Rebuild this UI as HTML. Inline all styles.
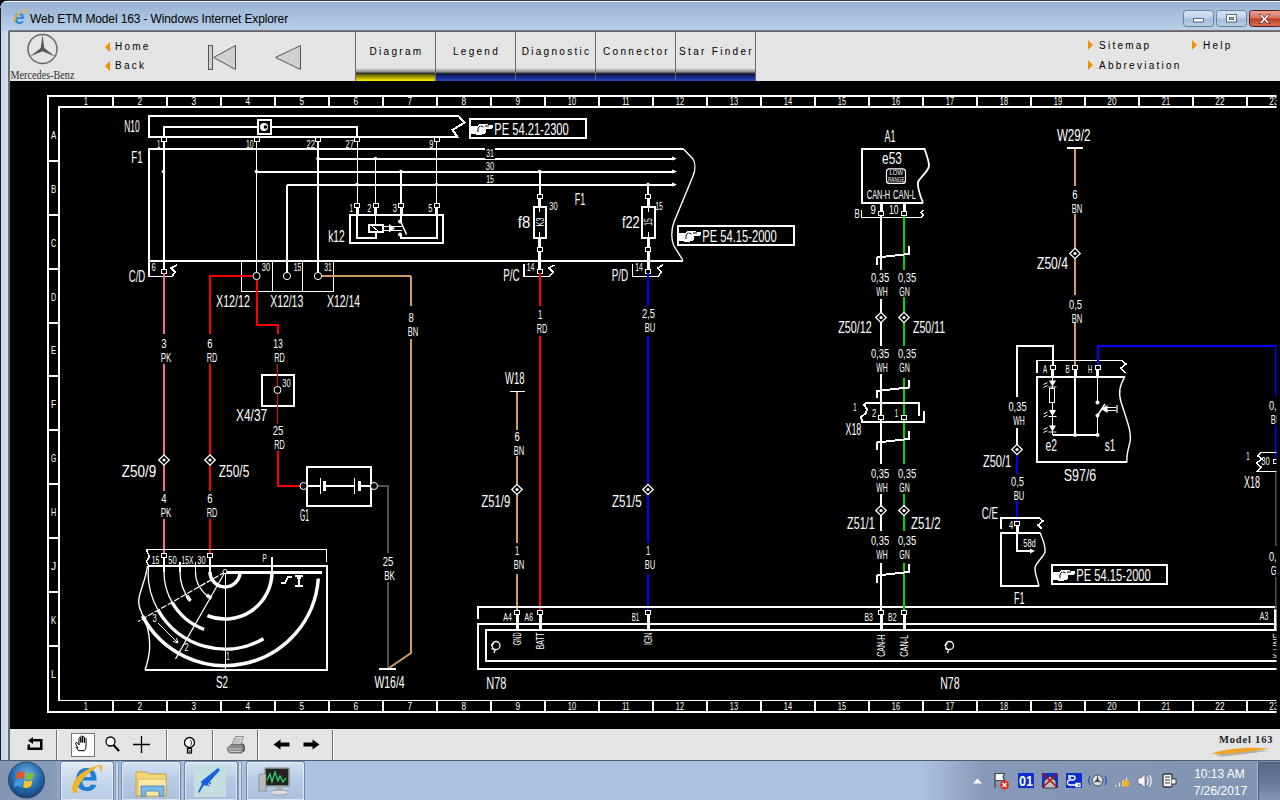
<!DOCTYPE html>
<html><head><meta charset="utf-8"><title>Web ETM Model 163</title>
<style>
*{margin:0;padding:0;box-sizing:border-box}
html,body{width:1280px;height:800px;overflow:hidden;background:#000;font-family:"Liberation Sans",sans-serif}
.abs{position:absolute}
#title{left:0;top:0;width:1280px;height:31px;background:linear-gradient(#98b3d3 0,#a3bddb 40%,#b2cae6 80%,#bad2ed 100%);border-top:1px solid #3a3a3a}
#title:before{content:"";position:absolute;left:0;top:0;width:100%;height:1px;background:#eef4fb}
#ttext{left:30px;top:11px;letter-spacing:-.13px;font-size:12px;color:#000;white-space:nowrap;line-height:16px}
#lborder{left:0;top:8px;width:10px;height:752px;background:linear-gradient(90deg,#222 0,#222 10%,#c4d5ea 12%,#cedced 55%,#d5e1f0 80%,#6c6c6c 84%,#6c6c6c 96%,#e4e4e4 100%);clip-path:polygon(0 0,1px 0,1px 23px,10px 23px,10px 100%,0 100%)}
#hline{left:9px;top:30px;width:1271px;height:2px;background:linear-gradient(#7d7d7d,#5e5e5e)}
#head{left:10px;top:32px;width:1270px;height:49px;background:#e4e4e4}
#black{left:10px;top:81px;width:1270px;height:648px;background:#000}
#tool{left:10px;top:729px;width:1270px;height:31px;background:#e4e4e4}
#task{left:0;top:760px;width:1280px;height:40px;background:linear-gradient(90deg,#8396b2 0,#8699b5 4.2%,#a3bbd9 5.2%,#a9c2e0 24%,#a9c2e0 72%,#8699b6 77%,#8094b1 100%);border-top:1px solid #4e5d72}
.nav{font-size:10px;letter-spacing:2.25px;color:#000;white-space:nowrap;line-height:12px}
.tab{top:32px;width:80px;height:49px;border-left:1px solid #6a6a6a;background:#e4e4e4}
.tab span{position:absolute;left:0;width:100%;top:14px;text-align:center;font-size:10px;letter-spacing:2.3px;padding-left:2px;line-height:12px;color:#000;white-space:nowrap}
.tab i{position:absolute;left:0;bottom:0;width:100%;height:13px;background:linear-gradient(#e4e4e4 0,#8a8a8a 30%,#2a2a2a 42%,#0b1550 48%,#2a44c8 100%)}
.tab.on i{background:linear-gradient(#e4e4e4 0,#8a8a8a 30%,#2a2a2a 42%,#5a5a00 48%,#fff000 100%)}
.sep{top:730px;width:2px;height:30px;border-left:1px solid #6e6e6e;border-right:1px solid #fff}
.tb{top:761px;height:39px;box-shadow:inset 0 0 0 1px rgba(255,255,255,.55);border:1px solid #6f86a6;border-bottom:0;border-radius:3px 3px 0 0;background:linear-gradient(#d3e1f2,#b4c9e4 50%,#a9c0de)}
svg text{font-family:"Liberation Sans",sans-serif;fill:#fff}
</style></head><body>
<div class="abs" id="title"></div>
<svg class="abs" style="left:0;top:0" width="12" height="12"><path d="M0,0 H8 C3,1 1,3 0,8 Z" fill="#000"/></svg>
<svg class="abs" style="left:12px;top:8px" width="18" height="18" viewBox="0 0 18 18"><text x="1.5" y="16" font-size="20" font-weight="bold" style="fill:#2b8ae2;font-family:'Liberation Sans',sans-serif">e</text><path d="M1.5,13.5 C0,10 6,3 14.5,1.5 C9,4 3,9 3,14 Z" fill="#f0b428"/><path d="M14,1.5 C16,2 15.5,5 14,6.5 C14.5,4.5 14.5,3 13,2.5 Z" fill="#f0b428"/></svg>
<div class="abs" id="ttext">Web ETM Model 163 - Windows Internet Explorer</div>
<!-- window buttons -->
<svg class="abs" style="left:1180px;top:8px" width="100" height="21" viewBox="1180 8 100 21">
<defs><linearGradient id="gb" x1="0" y1="0" x2="0" y2="1"><stop offset="0" stop-color="#d6e3f3"/><stop offset=".48" stop-color="#c0d3ea"/><stop offset=".52" stop-color="#a3bcdb"/><stop offset="1" stop-color="#b9cfe8"/></linearGradient>
<linearGradient id="gr" x1="0" y1="0" x2="0" y2="1"><stop offset="0" stop-color="#e9a99b"/><stop offset=".48" stop-color="#d7705c"/><stop offset=".52" stop-color="#c03a22"/><stop offset="1" stop-color="#d8735a"/></linearGradient></defs>
<rect x="1183.5" y="10.5" width="30" height="16" rx="3" fill="url(#gb)" stroke="#6f819a"/>
<rect x="1216.5" y="10.5" width="30" height="16" rx="3" fill="url(#gb)" stroke="#6f819a"/>
<rect x="1249.5" y="10.5" width="32" height="16" rx="3" fill="url(#gr)" stroke="#5a1c12"/>
<rect x="1193.5" y="18.5" width="10" height="3.5" fill="#fff" stroke="#5b6a80" stroke-width="1"/>
<rect x="1226.5" y="14.5" width="10" height="7.5" fill="#fff" stroke="#5b6a80" stroke-width="1"/><rect x="1229.5" y="17.5" width="4" height="2" fill="#a9bfdc" stroke="#5b6a80" stroke-width="1"/>
<path d="M1259,14.5 l3,0 l2.5,3 l2.5,-3 l3,0 l-4,4.5 l4,4.5 l-3,0 l-2.5,-3 l-2.5,3 l-3,0 l4,-4.5 Z" fill="#fff" stroke="#5b3030" stroke-width=".8"/>
</svg>
<div class="abs" id="lborder"></div>
<div class="abs" id="hline"></div>
<div class="abs" id="head"></div>
<!-- logo -->
<svg class="abs" style="left:10px;top:32px" width="80" height="49" viewBox="10 32 80 49">
<circle cx="42.5" cy="49" r="14.5" fill="none" stroke="#6a6a6a" stroke-width="1.5"/>
<path d="M42.5,34.5 L44.300,48 L55,56.5 L42.5,51.300 L30,56.5 L40.700,48 Z" fill="#555"/>
<text x="10.5" y="79" font-size="11.5" textLength="64" lengthAdjust="spacingAndGlyphs" style="fill:#333;font-family:'Liberation Serif',serif">Mercedes-Benz</text>
</svg>
<svg class="abs" style="left:101.5px;top:39px" width="10" height="36"><path d="M8,3 L3,8 L8,13 Z M8,22 L3,27 L8,32 Z" fill="#f39200"/></svg>
<div class="abs nav" style="left:115px;top:41px">Home</div>
<div class="abs nav" style="left:115px;top:60px">Back</div>
<svg class="abs" style="left:200px;top:38px" width="110" height="38" viewBox="200 38 110 38">
<rect x="208.5" y="45.5" width="4" height="24" fill="#d0d0d0" stroke="#555"/>
<path d="M213.5,57.5 L235.5,45.5 V69.5 Z" fill="#d0d0d0" stroke="#555"/>
<path d="M275.5,57.5 L300.5,45.5 V69.5 Z" fill="#d0d0d0" stroke="#555"/>
</svg>
<div class="abs tab on" style="left:355px"><span>Diagram</span><i></i></div>
<div class="abs tab" style="left:435px"><span>Legend</span><i></i></div>
<div class="abs tab" style="left:515px"><span>Diagnostic</span><i></i></div>
<div class="abs tab" style="left:595px"><span>Connector</span><i></i></div>
<div class="abs tab" style="left:675px;border-right:1px solid #6a6a6a;width:81px"><span>Star Finder</span><i></i></div>
<svg class="abs" style="left:1084px;top:38px" width="120" height="36"><path d="M4,2 L9,7 L4,12 Z M4,22 L9,27 L4,32 Z M108,2 L113,7 L108,12 Z" fill="#f39200"/></svg>
<div class="abs nav" style="left:1099px;top:40px">Sitemap</div>
<div class="abs nav" style="left:1203px;top:40px">Help</div>
<div class="abs nav" style="left:1099px;top:60px">Abbreviation</div>
<div class="abs" id="black"></div>
<svg class="abs" style="left:10px;top:81px" width="1270" height="648" viewBox="10 81 1270 648" shape-rendering="crispEdges">
<defs><clipPath id="clip"><rect x="10" y="81" width="1266.5" height="648"/></clipPath></defs>
<g clip-path="url(#clip)">
<line x1="48" y1="95" x2="48" y2="712.5" stroke="#fff" stroke-width="2"/>
<line x1="47" y1="96" x2="1300" y2="96" stroke="#fff" stroke-width="2"/>
<line x1="47" y1="711.5" x2="1300" y2="711.5" stroke="#fff" stroke-width="2"/>
<line x1="59" y1="106" x2="59" y2="701" stroke="#fff" stroke-width="2"/>
<line x1="58" y1="107" x2="1300" y2="107" stroke="#fff" stroke-width="2"/>
<line x1="58" y1="700.5" x2="1300" y2="700.5" stroke="#fff" stroke-width="1"/>
<line x1="113.0" y1="96" x2="113.0" y2="107" stroke="#fff" stroke-width="2"/>
<line x1="113.0" y1="700" x2="113.0" y2="711" stroke="#fff" stroke-width="2"/>
<line x1="167.0" y1="96" x2="167.0" y2="107" stroke="#fff" stroke-width="2"/>
<line x1="167.0" y1="700" x2="167.0" y2="711" stroke="#fff" stroke-width="2"/>
<line x1="221.0" y1="96" x2="221.0" y2="107" stroke="#fff" stroke-width="2"/>
<line x1="221.0" y1="700" x2="221.0" y2="711" stroke="#fff" stroke-width="2"/>
<line x1="275.0" y1="96" x2="275.0" y2="107" stroke="#fff" stroke-width="2"/>
<line x1="275.0" y1="700" x2="275.0" y2="711" stroke="#fff" stroke-width="2"/>
<line x1="329.0" y1="96" x2="329.0" y2="107" stroke="#fff" stroke-width="2"/>
<line x1="329.0" y1="700" x2="329.0" y2="711" stroke="#fff" stroke-width="2"/>
<line x1="383.0" y1="96" x2="383.0" y2="107" stroke="#fff" stroke-width="2"/>
<line x1="383.0" y1="700" x2="383.0" y2="711" stroke="#fff" stroke-width="2"/>
<line x1="437.0" y1="96" x2="437.0" y2="107" stroke="#fff" stroke-width="2"/>
<line x1="437.0" y1="700" x2="437.0" y2="711" stroke="#fff" stroke-width="2"/>
<line x1="491.0" y1="96" x2="491.0" y2="107" stroke="#fff" stroke-width="2"/>
<line x1="491.0" y1="700" x2="491.0" y2="711" stroke="#fff" stroke-width="2"/>
<line x1="545.0" y1="96" x2="545.0" y2="107" stroke="#fff" stroke-width="2"/>
<line x1="545.0" y1="700" x2="545.0" y2="711" stroke="#fff" stroke-width="2"/>
<line x1="599.0" y1="96" x2="599.0" y2="107" stroke="#fff" stroke-width="2"/>
<line x1="599.0" y1="700" x2="599.0" y2="711" stroke="#fff" stroke-width="2"/>
<line x1="653.0" y1="96" x2="653.0" y2="107" stroke="#fff" stroke-width="2"/>
<line x1="653.0" y1="700" x2="653.0" y2="711" stroke="#fff" stroke-width="2"/>
<line x1="707.0" y1="96" x2="707.0" y2="107" stroke="#fff" stroke-width="2"/>
<line x1="707.0" y1="700" x2="707.0" y2="711" stroke="#fff" stroke-width="2"/>
<line x1="761.0" y1="96" x2="761.0" y2="107" stroke="#fff" stroke-width="2"/>
<line x1="761.0" y1="700" x2="761.0" y2="711" stroke="#fff" stroke-width="2"/>
<line x1="815.0" y1="96" x2="815.0" y2="107" stroke="#fff" stroke-width="2"/>
<line x1="815.0" y1="700" x2="815.0" y2="711" stroke="#fff" stroke-width="2"/>
<line x1="869.0" y1="96" x2="869.0" y2="107" stroke="#fff" stroke-width="2"/>
<line x1="869.0" y1="700" x2="869.0" y2="711" stroke="#fff" stroke-width="2"/>
<line x1="923.0" y1="96" x2="923.0" y2="107" stroke="#fff" stroke-width="2"/>
<line x1="923.0" y1="700" x2="923.0" y2="711" stroke="#fff" stroke-width="2"/>
<line x1="977.0" y1="96" x2="977.0" y2="107" stroke="#fff" stroke-width="2"/>
<line x1="977.0" y1="700" x2="977.0" y2="711" stroke="#fff" stroke-width="2"/>
<line x1="1031.0" y1="96" x2="1031.0" y2="107" stroke="#fff" stroke-width="2"/>
<line x1="1031.0" y1="700" x2="1031.0" y2="711" stroke="#fff" stroke-width="2"/>
<line x1="1085.0" y1="96" x2="1085.0" y2="107" stroke="#fff" stroke-width="2"/>
<line x1="1085.0" y1="700" x2="1085.0" y2="711" stroke="#fff" stroke-width="2"/>
<line x1="1139.0" y1="96" x2="1139.0" y2="107" stroke="#fff" stroke-width="2"/>
<line x1="1139.0" y1="700" x2="1139.0" y2="711" stroke="#fff" stroke-width="2"/>
<line x1="1193.0" y1="96" x2="1193.0" y2="107" stroke="#fff" stroke-width="2"/>
<line x1="1193.0" y1="700" x2="1193.0" y2="711" stroke="#fff" stroke-width="2"/>
<line x1="1247.0" y1="96" x2="1247.0" y2="107" stroke="#fff" stroke-width="2"/>
<line x1="1247.0" y1="700" x2="1247.0" y2="711" stroke="#fff" stroke-width="2"/>
<line x1="1301.0" y1="96" x2="1301.0" y2="107" stroke="#fff" stroke-width="2"/>
<line x1="1301.0" y1="700" x2="1301.0" y2="711" stroke="#fff" stroke-width="2"/>
<text x="84.1" y="105.4" font-size="10" textLength="3.7" lengthAdjust="spacingAndGlyphs">1</text>
<text x="84.1" y="709.9" font-size="10" textLength="3.7" lengthAdjust="spacingAndGlyphs">1</text>
<text x="137.6" y="105.4" font-size="10" textLength="4.6" lengthAdjust="spacingAndGlyphs">2</text>
<text x="137.6" y="709.9" font-size="10" textLength="4.6" lengthAdjust="spacingAndGlyphs">2</text>
<text x="191.6" y="105.4" font-size="10" textLength="4.6" lengthAdjust="spacingAndGlyphs">3</text>
<text x="191.6" y="709.9" font-size="10" textLength="4.6" lengthAdjust="spacingAndGlyphs">3</text>
<text x="245.6" y="105.4" font-size="10" textLength="4.6" lengthAdjust="spacingAndGlyphs">4</text>
<text x="245.6" y="709.9" font-size="10" textLength="4.6" lengthAdjust="spacingAndGlyphs">4</text>
<text x="299.6" y="105.4" font-size="10" textLength="4.6" lengthAdjust="spacingAndGlyphs">5</text>
<text x="299.6" y="709.9" font-size="10" textLength="4.6" lengthAdjust="spacingAndGlyphs">5</text>
<text x="353.6" y="105.4" font-size="10" textLength="4.6" lengthAdjust="spacingAndGlyphs">6</text>
<text x="353.6" y="709.9" font-size="10" textLength="4.6" lengthAdjust="spacingAndGlyphs">6</text>
<text x="407.6" y="105.4" font-size="10" textLength="4.6" lengthAdjust="spacingAndGlyphs">7</text>
<text x="407.6" y="709.9" font-size="10" textLength="4.6" lengthAdjust="spacingAndGlyphs">7</text>
<text x="461.6" y="105.4" font-size="10" textLength="4.6" lengthAdjust="spacingAndGlyphs">8</text>
<text x="461.6" y="709.9" font-size="10" textLength="4.6" lengthAdjust="spacingAndGlyphs">8</text>
<text x="515.6" y="105.4" font-size="10" textLength="4.6" lengthAdjust="spacingAndGlyphs">9</text>
<text x="515.6" y="709.9" font-size="10" textLength="4.6" lengthAdjust="spacingAndGlyphs">9</text>
<text x="567.8" y="105.4" font-size="10" textLength="8.3" lengthAdjust="spacingAndGlyphs">10</text>
<text x="567.8" y="709.9" font-size="10" textLength="8.3" lengthAdjust="spacingAndGlyphs">10</text>
<text x="622.2" y="105.4" font-size="10" textLength="7.4" lengthAdjust="spacingAndGlyphs">11</text>
<text x="622.2" y="709.9" font-size="10" textLength="7.4" lengthAdjust="spacingAndGlyphs">11</text>
<text x="675.8" y="105.4" font-size="10" textLength="8.3" lengthAdjust="spacingAndGlyphs">12</text>
<text x="675.8" y="709.9" font-size="10" textLength="8.3" lengthAdjust="spacingAndGlyphs">12</text>
<text x="729.8" y="105.4" font-size="10" textLength="8.3" lengthAdjust="spacingAndGlyphs">13</text>
<text x="729.8" y="709.9" font-size="10" textLength="8.3" lengthAdjust="spacingAndGlyphs">13</text>
<text x="783.8" y="105.4" font-size="10" textLength="8.3" lengthAdjust="spacingAndGlyphs">14</text>
<text x="783.8" y="709.9" font-size="10" textLength="8.3" lengthAdjust="spacingAndGlyphs">14</text>
<text x="837.8" y="105.4" font-size="10" textLength="8.3" lengthAdjust="spacingAndGlyphs">15</text>
<text x="837.8" y="709.9" font-size="10" textLength="8.3" lengthAdjust="spacingAndGlyphs">15</text>
<text x="891.8" y="105.4" font-size="10" textLength="8.3" lengthAdjust="spacingAndGlyphs">16</text>
<text x="891.8" y="709.9" font-size="10" textLength="8.3" lengthAdjust="spacingAndGlyphs">16</text>
<text x="945.8" y="105.4" font-size="10" textLength="8.3" lengthAdjust="spacingAndGlyphs">17</text>
<text x="945.8" y="709.9" font-size="10" textLength="8.3" lengthAdjust="spacingAndGlyphs">17</text>
<text x="999.8" y="105.4" font-size="10" textLength="8.3" lengthAdjust="spacingAndGlyphs">18</text>
<text x="999.8" y="709.9" font-size="10" textLength="8.3" lengthAdjust="spacingAndGlyphs">18</text>
<text x="1053.8" y="105.4" font-size="10" textLength="8.3" lengthAdjust="spacingAndGlyphs">19</text>
<text x="1053.8" y="709.9" font-size="10" textLength="8.3" lengthAdjust="spacingAndGlyphs">19</text>
<text x="1107.3" y="105.4" font-size="10" textLength="9.2" lengthAdjust="spacingAndGlyphs">20</text>
<text x="1107.3" y="709.9" font-size="10" textLength="9.2" lengthAdjust="spacingAndGlyphs">20</text>
<text x="1161.8" y="105.4" font-size="10" textLength="8.3" lengthAdjust="spacingAndGlyphs">21</text>
<text x="1161.8" y="709.9" font-size="10" textLength="8.3" lengthAdjust="spacingAndGlyphs">21</text>
<text x="1215.3" y="105.4" font-size="10" textLength="9.2" lengthAdjust="spacingAndGlyphs">22</text>
<text x="1215.3" y="709.9" font-size="10" textLength="9.2" lengthAdjust="spacingAndGlyphs">22</text>
<text x="1269.3" y="105.4" font-size="10" textLength="9.2" lengthAdjust="spacingAndGlyphs">23</text>
<text x="1269.3" y="709.9" font-size="10" textLength="9.2" lengthAdjust="spacingAndGlyphs">23</text>
<line x1="48" y1="160.8" x2="59" y2="160.8" stroke="#fff" stroke-width="2"/>
<line x1="48" y1="214.70000000000002" x2="59" y2="214.70000000000002" stroke="#fff" stroke-width="2"/>
<line x1="48" y1="268.6" x2="59" y2="268.6" stroke="#fff" stroke-width="2"/>
<line x1="48" y1="322.5" x2="59" y2="322.5" stroke="#fff" stroke-width="2"/>
<line x1="48" y1="376.4" x2="59" y2="376.4" stroke="#fff" stroke-width="2"/>
<line x1="48" y1="430.3" x2="59" y2="430.3" stroke="#fff" stroke-width="2"/>
<line x1="48" y1="484.2" x2="59" y2="484.2" stroke="#fff" stroke-width="2"/>
<line x1="48" y1="538.1" x2="59" y2="538.1" stroke="#fff" stroke-width="2"/>
<line x1="48" y1="592.0" x2="59" y2="592.0" stroke="#fff" stroke-width="2"/>
<line x1="48" y1="645.9" x2="59" y2="645.9" stroke="#fff" stroke-width="2"/>
<text x="50.9" y="138.9" font-size="11.5" textLength="5.2" lengthAdjust="spacingAndGlyphs">A</text>
<text x="50.9" y="192.8" font-size="11.5" textLength="5.2" lengthAdjust="spacingAndGlyphs">B</text>
<text x="50.9" y="246.6" font-size="11.5" textLength="5.2" lengthAdjust="spacingAndGlyphs">C</text>
<text x="50.9" y="300.5" font-size="11.5" textLength="5.2" lengthAdjust="spacingAndGlyphs">D</text>
<text x="50.9" y="354.4" font-size="11.5" textLength="5.2" lengthAdjust="spacingAndGlyphs">E</text>
<text x="50.9" y="408.2" font-size="11.5" textLength="5.2" lengthAdjust="spacingAndGlyphs">F</text>
<text x="50.9" y="462.1" font-size="11.5" textLength="5.2" lengthAdjust="spacingAndGlyphs">G</text>
<text x="50.9" y="516.0" font-size="11.5" textLength="5.2" lengthAdjust="spacingAndGlyphs">H</text>
<text x="50.9" y="569.9" font-size="11.5" textLength="5.2" lengthAdjust="spacingAndGlyphs">J</text>
<text x="50.9" y="623.7" font-size="11.5" textLength="5.2" lengthAdjust="spacingAndGlyphs">K</text>
<text x="50.9" y="677.6" font-size="11.5" textLength="5.2" lengthAdjust="spacingAndGlyphs">L</text>
<polyline points="458.5,116 149,116 149,137 457.5,137 452.5,130 464.5,122.5 458.5,116" fill="none" stroke="#fff" stroke-width="2" />
<text x="124.2" y="131.9" font-size="16.2" textLength="15.5" lengthAdjust="spacingAndGlyphs">N10</text>
<polyline points="163.5,137.5 163.5,127 357,127 357,137.5" fill="none" stroke="#fff" stroke-width="2" />
<rect x="257.5" y="120" width="13" height="14" fill="#000" stroke="#fff" stroke-width="2"/>
<circle cx="264" cy="127" r="4" fill="#fff" shape-rendering="auto"/><circle cx="265.5" cy="127" r="1.8" fill="#000" shape-rendering="auto"/>
<rect x="161.0" y="137.5" width="5" height="4" fill="#000" stroke="#fff" stroke-width="1"/>
<text x="157.1" y="147.8" font-size="10.5" textLength="3.4" lengthAdjust="spacingAndGlyphs">1</text>
<rect x="254.0" y="137.5" width="5" height="4" fill="#000" stroke="#fff" stroke-width="1"/>
<text x="245.9" y="147.8" font-size="10.5" textLength="7.6" lengthAdjust="spacingAndGlyphs">10</text>
<rect x="315.5" y="137.5" width="5" height="4" fill="#000" stroke="#fff" stroke-width="1"/>
<text x="306.6" y="147.8" font-size="10.5" textLength="8.4" lengthAdjust="spacingAndGlyphs">22</text>
<rect x="354.5" y="137.5" width="5" height="4" fill="#000" stroke="#fff" stroke-width="1"/>
<text x="345.6" y="147.8" font-size="10.5" textLength="8.4" lengthAdjust="spacingAndGlyphs">27</text>
<rect x="434.0" y="137.5" width="5" height="4" fill="#000" stroke="#fff" stroke-width="1"/>
<text x="429.3" y="147.8" font-size="10.5" textLength="4.2" lengthAdjust="spacingAndGlyphs">9</text>
<polyline points="683,149 149,149 149,261 683,261" fill="none" stroke="#fff" stroke-width="2" />
<path d="M683,148.5 L693,159 C695.5,163 695.5,170 693,176 L674,222 C671,230 671,240 674,246 L683,260.5" fill="none" stroke="#fff" stroke-width="1.4" shape-rendering="auto"/>
<text x="131.2" y="162.9" font-size="16.2" textLength="11.5" lengthAdjust="spacingAndGlyphs">F1</text>
<text x="574.8" y="205.4" font-size="16.2" textLength="10.5" lengthAdjust="spacingAndGlyphs">F1</text>
<line x1="163.5" y1="141" x2="163.5" y2="271" stroke="#fff" stroke-width="2"/>
<line x1="256.5" y1="141" x2="256.5" y2="273" stroke="#fff" stroke-width="1"/>
<line x1="318" y1="141" x2="318" y2="273" stroke="#fff" stroke-width="2"/>
<line x1="287" y1="184.5" x2="287" y2="273" stroke="#fff" stroke-width="2"/>
<line x1="357" y1="141" x2="357" y2="204" stroke="#fff" stroke-width="1"/>
<line x1="375.5" y1="158.5" x2="375.5" y2="204" stroke="#fff" stroke-width="1"/>
<line x1="401" y1="171.5" x2="401" y2="204" stroke="#fff" stroke-width="2"/>
<line x1="436.5" y1="141" x2="436.5" y2="204" stroke="#fff" stroke-width="1"/>
<line x1="318" y1="158.5" x2="675" y2="158.5" stroke="#fff" stroke-width="2"/>
<line x1="256.5" y1="171.5" x2="675" y2="171.5" stroke="#fff" stroke-width="2"/>
<line x1="287" y1="184.5" x2="675" y2="184.5" stroke="#fff" stroke-width="2"/>
<path d="M672,156.5 L677,158.5 L672,160.5 Z" fill="#fff" shape-rendering="auto"/>
<path d="M672,169.5 L677,171.5 L672,173.5 Z" fill="#fff" shape-rendering="auto"/>
<path d="M672,182.5 L677,184.5 L672,186.5 Z" fill="#fff" shape-rendering="auto"/>
<rect x="485.2" y="148.2" width="9.6" height="10.7" fill="#000"/>
<text x="486.2" y="157.3" font-size="10.5" textLength="7.6" lengthAdjust="spacingAndGlyphs">31</text>
<rect x="484.8" y="160.7" width="10.4" height="10.7" fill="#000"/>
<text x="485.8" y="169.8" font-size="10.5" textLength="8.4" lengthAdjust="spacingAndGlyphs">30</text>
<rect x="485.2" y="173.7" width="9.6" height="10.7" fill="#000"/>
<text x="486.2" y="182.8" font-size="10.5" textLength="7.6" lengthAdjust="spacingAndGlyphs">15</text>
<circle cx="318" cy="158.5" r="1.8" fill="#fff" shape-rendering="auto"/>
<circle cx="375.5" cy="158.5" r="1.8" fill="#fff" shape-rendering="auto"/>
<circle cx="256.5" cy="171.5" r="1.8" fill="#fff" shape-rendering="auto"/>
<circle cx="401" cy="171.5" r="1.8" fill="#fff" shape-rendering="auto"/>
<circle cx="357" cy="184.5" r="1.8" fill="#fff" shape-rendering="auto"/>
<circle cx="436.5" cy="184.5" r="1.8" fill="#fff" shape-rendering="auto"/>
<circle cx="163.5" cy="171.5" r="1.8" fill="#fff" shape-rendering="auto"/>
<circle cx="539.5" cy="171.5" r="1.8" fill="#fff" shape-rendering="auto"/>
<circle cx="648" cy="184.5" r="1.8" fill="#fff" shape-rendering="auto"/>
<rect x="350" y="215" width="92.5" height="27.5" fill="none" stroke="#fff" stroke-width="2"/>
<text x="328.2" y="241.9" font-size="16.2" textLength="16.5" lengthAdjust="spacingAndGlyphs">k12</text>
<rect x="354.5" y="203.5" width="5" height="4" fill="#000" stroke="#fff" stroke-width="1"/>
<line x1="357" y1="207" x2="357" y2="215" stroke="#fff" stroke-width="3"/>
<text x="349.6" y="211.8" font-size="10.5" textLength="3.4" lengthAdjust="spacingAndGlyphs">1</text>
<rect x="373.0" y="203.5" width="5" height="4" fill="#000" stroke="#fff" stroke-width="1"/>
<line x1="375.5" y1="207" x2="375.5" y2="215" stroke="#fff" stroke-width="3"/>
<text x="367.3" y="211.8" font-size="10.5" textLength="4.2" lengthAdjust="spacingAndGlyphs">2</text>
<rect x="398.5" y="203.5" width="5" height="4" fill="#000" stroke="#fff" stroke-width="1"/>
<line x1="401" y1="207" x2="401" y2="215" stroke="#fff" stroke-width="3"/>
<text x="392.8" y="211.8" font-size="10.5" textLength="4.2" lengthAdjust="spacingAndGlyphs">3</text>
<rect x="434.0" y="203.5" width="5" height="4" fill="#000" stroke="#fff" stroke-width="1"/>
<line x1="436.5" y1="207" x2="436.5" y2="215" stroke="#fff" stroke-width="3"/>
<text x="428.3" y="211.8" font-size="10.5" textLength="4.2" lengthAdjust="spacingAndGlyphs">5</text>
<polyline points="357,215 357,238 375.5,238 375.5,231.5" fill="none" stroke="#fff" stroke-width="2" />
<line x1="375.5" y1="215" x2="375.5" y2="225" stroke="#fff" stroke-width="1"/>
<rect x="368.5" y="225" width="14" height="6.5" fill="none" stroke="#fff" stroke-width="2"/>
<line x1="372" y1="226" x2="378" y2="231" stroke="#fff" stroke-width="1"/>
<line x1="382.5" y1="226.5" x2="402" y2="226.5" stroke="#fff" stroke-width="1"/>
<line x1="382.5" y1="230" x2="402" y2="230" stroke="#fff" stroke-width="1"/>
<path d="M389,224 L395,228.2 L389,232.5 Z" fill="#fff" shape-rendering="auto"/>
<line x1="401" y1="215" x2="401" y2="221" stroke="#fff" stroke-width="2"/>
<circle cx="400" cy="221.5" r="2" fill="#fff" shape-rendering="auto"/>
<circle cx="400" cy="234.5" r="2" fill="#fff" shape-rendering="auto"/>
<line x1="400.5" y1="221" x2="406.5" y2="234.5" stroke="#fff" stroke-width="1.5" shape-rendering="auto"/>
<polyline points="400.5,235 400.5,238 436.5,238 436.5,215" fill="none" stroke="#fff" stroke-width="2" />
<line x1="539.5" y1="171.5" x2="539.5" y2="196" stroke="#fff" stroke-width="2"/>
<rect x="537.0" y="194.5" width="5" height="4" fill="#000" stroke="#fff" stroke-width="1"/>
<line x1="539.5" y1="198" x2="539.5" y2="206.5" stroke="#fff" stroke-width="3"/>
<rect x="533.5" y="206.5" width="12.5" height="31" fill="none" stroke="#fff" stroke-width="2"/>
<line x1="539.5" y1="206.5" x2="539.5" y2="212" stroke="#fff" stroke-width="1"/>
<line x1="539.5" y1="232" x2="539.5" y2="237.5" stroke="#fff" stroke-width="1"/>
<text x="535.8" y="225.8" font-size="10.5" textLength="8.4" lengthAdjust="spacingAndGlyphs" transform="rotate(-90 540.0 222)">K3</text>
<line x1="539.5" y1="237.5" x2="539.5" y2="247" stroke="#fff" stroke-width="3"/>
<rect x="537.0" y="247" width="5" height="4" fill="#000" stroke="#fff" stroke-width="1"/>
<line x1="539.5" y1="251" x2="539.5" y2="271" stroke="#fff" stroke-width="3"/>
<text x="549.3" y="210.3" font-size="10.5" textLength="8.4" lengthAdjust="spacingAndGlyphs">30</text>
<text x="517.8" y="227.9" font-size="16.2" textLength="12.5" lengthAdjust="spacingAndGlyphs">f8</text>
<line x1="648" y1="184.5" x2="648" y2="196" stroke="#fff" stroke-width="2"/>
<rect x="645.5" y="194.5" width="5" height="4" fill="#000" stroke="#fff" stroke-width="1"/>
<line x1="648" y1="198" x2="648" y2="206.5" stroke="#fff" stroke-width="3"/>
<rect x="642" y="206.5" width="12.5" height="31" fill="none" stroke="#fff" stroke-width="2"/>
<line x1="648" y1="206.5" x2="648" y2="212" stroke="#fff" stroke-width="1"/>
<line x1="648" y1="232" x2="648" y2="237.5" stroke="#fff" stroke-width="1"/>
<text x="644.7" y="225.8" font-size="10.5" textLength="7.6" lengthAdjust="spacingAndGlyphs" transform="rotate(-90 648.5 222)">15</text>
<line x1="648" y1="237.5" x2="648" y2="247" stroke="#fff" stroke-width="3"/>
<rect x="645.5" y="247" width="5" height="4" fill="#000" stroke="#fff" stroke-width="1"/>
<line x1="648" y1="251" x2="648" y2="271" stroke="#fff" stroke-width="3"/>
<text x="655.2" y="210.3" font-size="10.5" textLength="7.6" lengthAdjust="spacingAndGlyphs">15</text>
<text x="621.9" y="227.9" font-size="16.2" textLength="17.8" lengthAdjust="spacingAndGlyphs">f22</text>
<rect x="470" y="119" width="116" height="19" fill="none" stroke="#fff" stroke-width="2"/>
<g transform="translate(471 119.5)" shape-rendering="crispEdges"><path d="M0,6 H7 L8.5,4 H16 L17,5 H22 V8 L21,9 H15 V13 L14,14 H11 L10.5,15 H5 L4.5,14 H0 Z" fill="#fff"/><path d="M9.5,6.5 C7.5,7 6.5,9 7,12.5 M10,6.5 L12.5,7.5 M14,6.5 H18" fill="none" stroke="#000" stroke-width="1" shape-rendering="auto"/></g>
<text x="494.3" y="134.7" font-size="16.2" textLength="74.5" lengthAdjust="spacingAndGlyphs">PE 54.21-2300</text>
<rect x="678" y="226" width="116" height="19" fill="none" stroke="#fff" stroke-width="2"/>
<g transform="translate(679 226.5)" shape-rendering="crispEdges"><path d="M0,6 H7 L8.5,4 H16 L17,5 H22 V8 L21,9 H15 V13 L14,14 H11 L10.5,15 H5 L4.5,14 H0 Z" fill="#fff"/><path d="M9.5,6.5 C7.5,7 6.5,9 7,12.5 M10,6.5 L12.5,7.5 M14,6.5 H18" fill="none" stroke="#000" stroke-width="1" shape-rendering="auto"/></g>
<text x="702.3" y="241.7" font-size="16.2" textLength="74.5" lengthAdjust="spacingAndGlyphs">PE 54.15-2000</text>
<text x="128.8" y="282.4" font-size="16.2" textLength="16.5" lengthAdjust="spacingAndGlyphs">C/D</text>
<polyline points="149,261 149,276.5 172,276.5 175,272 171,268 177,265" fill="none" stroke="#fff" stroke-width="1.5" />
<text x="151.4" y="270.8" font-size="10.5" textLength="4.2" lengthAdjust="spacingAndGlyphs">6</text>
<rect x="161.0" y="269" width="5" height="4" fill="#000" stroke="#fff" stroke-width="1"/>
<text x="503.2" y="281.4" font-size="16.2" textLength="16.6" lengthAdjust="spacingAndGlyphs">P/C</text>
<polyline points="524.0,263.5 524.0,276.5 549.5,276.5 553.0,272 549.0,268 554.5,265" fill="none" stroke="#fff" stroke-width="1.5" />
<text x="526.7" y="270.8" font-size="10.5" textLength="7.6" lengthAdjust="spacingAndGlyphs">14</text>
<rect x="537.0" y="269" width="5" height="4" fill="#000" stroke="#fff" stroke-width="1"/>
<text x="611.7" y="281.4" font-size="16.2" textLength="16.6" lengthAdjust="spacingAndGlyphs">P/D</text>
<polyline points="632.5,263.5 632.5,276.5 658,276.5 661.5,272 657.5,268 663,265" fill="none" stroke="#fff" stroke-width="1.5" />
<text x="635.2" y="270.8" font-size="10.5" textLength="7.6" lengthAdjust="spacingAndGlyphs">14</text>
<rect x="645.5" y="269" width="5" height="4" fill="#000" stroke="#fff" stroke-width="1"/>
<rect x="241.5" y="261" width="92" height="30.5" fill="none" stroke="#fff" stroke-width="1"/>
<line x1="272.5" y1="261" x2="272.5" y2="291" stroke="#fff" stroke-width="1"/>
<line x1="302.5" y1="261" x2="302.5" y2="291" stroke="#fff" stroke-width="1"/>
<text x="216.0" y="306.9" font-size="16.2" textLength="34.0" lengthAdjust="spacingAndGlyphs">X12/12</text>
<text x="270.2" y="306.9" font-size="16.2" textLength="33.0" lengthAdjust="spacingAndGlyphs">X12/13</text>
<text x="327.1" y="306.9" font-size="16.2" textLength="33.0" lengthAdjust="spacingAndGlyphs">X12/14</text>
<text x="261.8" y="271.3" font-size="10.5" textLength="8.4" lengthAdjust="spacingAndGlyphs">30</text>
<text x="293.7" y="271.3" font-size="10.5" textLength="7.6" lengthAdjust="spacingAndGlyphs">15</text>
<text x="324.2" y="271.3" font-size="10.5" textLength="7.6" lengthAdjust="spacingAndGlyphs">31</text>
<line x1="164" y1="273" x2="164" y2="334" stroke="#ff6699" stroke-width="2"/>
<line x1="164" y1="363.5" x2="164" y2="490.5" stroke="#ff6699" stroke-width="2"/>
<line x1="164" y1="519" x2="164" y2="553.5" stroke="#ff6699" stroke-width="2"/>
<text x="161.3" y="347.8" font-size="13.1" textLength="5.3" lengthAdjust="spacingAndGlyphs">3</text>
<text x="160.7" y="361.8" font-size="13.1" textLength="10.6" lengthAdjust="spacingAndGlyphs">PK</text>
<text x="161.3" y="503.3" font-size="13.1" textLength="5.3" lengthAdjust="spacingAndGlyphs">4</text>
<text x="160.7" y="517.3" font-size="13.1" textLength="10.6" lengthAdjust="spacingAndGlyphs">PK</text>
<path d="M158.8,460 L164,454.8 L169.2,460 L164,465.2 Z" fill="#000" stroke="#fff" stroke-width="1.3" shape-rendering="auto"/>
<circle cx="164" cy="460" r="1.6" fill="#fff" shape-rendering="auto"/>
<text x="121.8" y="476.9" font-size="16.2" textLength="34.4" lengthAdjust="spacingAndGlyphs">Z50/9</text>
<polyline points="252,276 210,276 210,334" fill="none" stroke="#ff0000" stroke-width="2" />
<line x1="210" y1="363.5" x2="210" y2="490.5" stroke="#ff0000" stroke-width="2"/>
<line x1="210" y1="519" x2="210" y2="553.5" stroke="#ff0000" stroke-width="2"/>
<text x="207.3" y="347.8" font-size="13.1" textLength="5.3" lengthAdjust="spacingAndGlyphs">6</text>
<text x="206.7" y="361.8" font-size="13.1" textLength="10.6" lengthAdjust="spacingAndGlyphs">RD</text>
<text x="207.3" y="503.3" font-size="13.1" textLength="5.3" lengthAdjust="spacingAndGlyphs">6</text>
<text x="206.7" y="517.3" font-size="13.1" textLength="10.6" lengthAdjust="spacingAndGlyphs">RD</text>
<path d="M204.8,460 L210,454.8 L215.2,460 L210,465.2 Z" fill="#000" stroke="#fff" stroke-width="1.3" shape-rendering="auto"/>
<circle cx="210" cy="460" r="1.6" fill="#fff" shape-rendering="auto"/>
<text x="218.7" y="476.9" font-size="16.2" textLength="30.6" lengthAdjust="spacingAndGlyphs">Z50/5</text>
<polyline points="256.5,280 256.5,324.5 277.5,324.5 277.5,334" fill="none" stroke="#ff0000" stroke-width="2" />
<text x="273.2" y="347.8" font-size="13.1" textLength="9.5" lengthAdjust="spacingAndGlyphs">13</text>
<text x="274.2" y="361.8" font-size="13.1" textLength="10.6" lengthAdjust="spacingAndGlyphs">RD</text>
<rect x="261.5" y="375" width="32" height="30.5" fill="none" stroke="#fff" stroke-width="2"/>
<line x1="277.5" y1="363.5" x2="277.5" y2="423.5" stroke="#ff0000" stroke-width="1.5"/>
<text x="282.3" y="387.3" font-size="10.5" textLength="8.4" lengthAdjust="spacingAndGlyphs">30</text>
<text x="236.1" y="421.4" font-size="16.2" textLength="31.0" lengthAdjust="spacingAndGlyphs">X4/37</text>
<text x="272.7" y="435.3" font-size="13.1" textLength="10.6" lengthAdjust="spacingAndGlyphs">25</text>
<text x="274.2" y="449.3" font-size="13.1" textLength="10.6" lengthAdjust="spacingAndGlyphs">RD</text>
<polyline points="277.5,451 277.5,486 300,486" fill="none" stroke="#ff0000" stroke-width="2" />
<circle cx="277.5" cy="390" r="3.5" fill="#000" stroke="#fff" stroke-width="1" shape-rendering="auto"/>
<line x1="322" y1="276" x2="411" y2="276" stroke="#d09a60" stroke-width="2"/>
<circle cx="256.5" cy="276" r="3.6" fill="#000" stroke="#fff" stroke-width="1" shape-rendering="auto"/>
<circle cx="287" cy="276" r="3.6" fill="#000" stroke="#fff" stroke-width="1" shape-rendering="auto"/>
<circle cx="318" cy="276" r="3.6" fill="#000" stroke="#fff" stroke-width="1" shape-rendering="auto"/>
<rect x="307" y="466.5" width="63.5" height="39" fill="none" stroke="#fff" stroke-width="2"/>
<circle cx="303.5" cy="486" r="3.5" fill="#000" stroke="#fff" stroke-width="1" shape-rendering="auto"/>
<circle cx="374" cy="486" r="3.5" fill="#000" stroke="#fff" stroke-width="1" shape-rendering="auto"/>
<line x1="307" y1="486" x2="320" y2="486" stroke="#fff" stroke-width="2"/>
<line x1="320" y1="478" x2="320" y2="494" stroke="#fff" stroke-width="1"/>
<line x1="324.5" y1="481" x2="324.5" y2="491" stroke="#fff" stroke-width="3"/>
<line x1="324.5" y1="486" x2="354.5" y2="486" stroke="#fff" stroke-width="2"/>
<line x1="354.5" y1="478" x2="354.5" y2="494" stroke="#fff" stroke-width="1"/>
<line x1="359.5" y1="481" x2="359.5" y2="491" stroke="#fff" stroke-width="3"/>
<line x1="359.5" y1="486" x2="370.5" y2="486" stroke="#fff" stroke-width="2"/>
<text x="299.9" y="521.4" font-size="16.2" textLength="9.0" lengthAdjust="spacingAndGlyphs">G1</text>
<polyline points="377.5,486 387.5,486 387.5,553" fill="none" stroke="#505050" stroke-width="2" />
<line x1="387.5" y1="582" x2="387.5" y2="668.5" stroke="#505050" stroke-width="2"/>
<text x="382.7" y="566.3" font-size="13.1" textLength="10.6" lengthAdjust="spacingAndGlyphs">25</text>
<text x="384.2" y="580.3" font-size="13.1" textLength="10.6" lengthAdjust="spacingAndGlyphs">BK</text>
<line x1="379" y1="668.5" x2="396" y2="668.5" stroke="#fff" stroke-width="2"/>
<text x="374.4" y="688.2" font-size="16.2" textLength="30.3" lengthAdjust="spacingAndGlyphs">W16/4</text>
<polyline points="411,276 411,306" fill="none" stroke="#d09a60" stroke-width="2" />
<polyline points="411,339 411,653 389,668" fill="none" stroke="#d09a60" stroke-width="2" shape-rendering="auto"/>
<text x="408.4" y="322.3" font-size="13.1" textLength="5.3" lengthAdjust="spacingAndGlyphs">8</text>
<text x="407.7" y="336.3" font-size="13.1" textLength="10.6" lengthAdjust="spacingAndGlyphs">BN</text>
<polyline points="326.5,562 326.5,549.5 146.5,549.5 149.5,557 146.5,561 148,565" fill="none" stroke="#fff" stroke-width="1.5" />
<polyline points="147.5,566 326.5,566 326.5,669.5 145,669.5" fill="none" stroke="#fff" stroke-width="2" />
<path d="M145,670 C150,655 151,645 148,630 C144,615 137,608 139,598 C141,588 146,578 147.5,566" fill="none" stroke="#fff" stroke-width="1.4" shape-rendering="auto"/>
<text x="151.7" y="563.8" font-size="10.5" textLength="7.6" lengthAdjust="spacingAndGlyphs">15</text>
<text x="168.3" y="563.8" font-size="10.5" textLength="8.4" lengthAdjust="spacingAndGlyphs">50</text>
<text x="181.6" y="563.8" font-size="10.5" textLength="11.8" lengthAdjust="spacingAndGlyphs">15X</text>
<text x="197.3" y="563.8" font-size="10.5" textLength="8.4" lengthAdjust="spacingAndGlyphs">30</text>
<text x="262.4" y="562.3" font-size="10.5" textLength="4.2" lengthAdjust="spacingAndGlyphs">P</text>
<rect x="161.5" y="553.5" width="5" height="4" fill="#000" stroke="#fff" stroke-width="1"/>
<rect x="207.5" y="553.5" width="5" height="4" fill="#000" stroke="#fff" stroke-width="1"/>
<line x1="225" y1="572" x2="322" y2="572" stroke="#fff" stroke-width="3"/>
<line x1="225" y1="572" x2="225" y2="669" stroke="#fff" stroke-width="1"/>
<line x1="210" y1="558" x2="210" y2="572" stroke="#fff" stroke-width="2"/>
<path d="M210.0,572.0 A15,15 0 0 0 240.0,572.0" fill="none" stroke="#fff" stroke-width="3.5" shape-rendering="auto"/>
<line x1="272" y1="557" x2="272" y2="572" stroke="#fff" stroke-width="2"/>
<path d="M272.0,572.0 A47,47 0 0 1 207.4,615.6" fill="none" stroke="#fff" stroke-width="3.5" shape-rendering="auto"/>
<line x1="195.5" y1="562" x2="195.5" y2="572" stroke="#fff" stroke-width="1.3"/>
<path d="M195.5,572.0 A29.5,29.5 0 0 0 210.7,597.8" fill="none" stroke="#fff" stroke-width="1.3" shape-rendering="auto"/>
<path d="M206.8,595.2 A29.5,29.5 0 0 0 211.6,598.3" fill="none" stroke="#fff" stroke-width="3.5" shape-rendering="auto"/>
<line x1="180" y1="562" x2="180" y2="572" stroke="#fff" stroke-width="1.3"/>
<path d="M180.0,572.0 A45,45 0 0 0 189.5,599.7" fill="none" stroke="#fff" stroke-width="1.3" shape-rendering="auto"/>
<path d="M186.8,595.8 A45,45 0 0 0 190.5,600.9" fill="none" stroke="#fff" stroke-width="3.5" shape-rendering="auto"/>
<line x1="164" y1="558" x2="164" y2="572" stroke="#fff" stroke-width="1.3"/>
<path d="M164.0,572.0 A61,61 0 0 0 172.2,602.5" fill="none" stroke="#fff" stroke-width="1.3" shape-rendering="auto"/>
<path d="M172.2,602.5 A61,61 0 0 0 204.1,629.3" fill="none" stroke="#fff" stroke-width="3.5" shape-rendering="auto"/>
<line x1="148.5" y1="566" x2="148.5" y2="572" stroke="#fff" stroke-width="1.3"/>
<path d="M148.0,572.0 A77,77 0 0 0 158.3,610.5" fill="none" stroke="#fff" stroke-width="1.3" shape-rendering="auto"/>
<path d="M158.3,610.5 A77,77 0 0 0 263.5,638.7" fill="none" stroke="#fff" stroke-width="3.5" shape-rendering="auto"/>
<path d="M318.3,578.5 A93.5,93.5 0 0 1 142.4,615.9" fill="none" stroke="#fff" stroke-width="3.5" shape-rendering="auto"/>
<line x1="225" y1="572" x2="138.1" y2="621.5" stroke="#fff" stroke-width="1.2" stroke-dasharray="6 1.5" shape-rendering="auto"/>
<line x1="225" y1="572" x2="175.5" y2="658.9" stroke="#fff" stroke-width="1.2" shape-rendering="auto"/>
<circle cx="225" cy="571.5" r="2" fill="#000" stroke="#fff" stroke-width="1" shape-rendering="auto"/>
<text x="152.4" y="622.3" font-size="10.5" textLength="4.2" lengthAdjust="spacingAndGlyphs">3</text>
<text x="184.4" y="650.8" font-size="10.5" textLength="4.2" lengthAdjust="spacingAndGlyphs">2</text>
<text x="226.3" y="660.3" font-size="10.5" textLength="3.4" lengthAdjust="spacingAndGlyphs">1</text>
<path d="M158,623 L178,643 M178,643 l-5,-1.5 M178,643 l-1.5,-5" stroke="#fff" stroke-width="1" fill="none" shape-rendering="auto"/>
<polyline points="281,583 285,583 288,577 292,577" fill="none" stroke="#fff" stroke-width="1.5" />
<path d="M295,576 h8 M295,586 h8 M297,576 l2,5 l2,-5 M299,576 v10" stroke="#fff" stroke-width="1.2" fill="none"/>
<text x="216.0" y="688.2" font-size="16.2" textLength="12.0" lengthAdjust="spacingAndGlyphs">S2</text>
<line x1="540" y1="273" x2="540" y2="306" stroke="#ff0000" stroke-width="2"/>
<line x1="540" y1="335.5" x2="540" y2="611" stroke="#ff0000" stroke-width="2"/>
<text x="537.9" y="318.8" font-size="13.1" textLength="4.2" lengthAdjust="spacingAndGlyphs">1</text>
<text x="536.7" y="332.8" font-size="13.1" textLength="10.6" lengthAdjust="spacingAndGlyphs">RD</text>
<line x1="648" y1="273" x2="648" y2="306" stroke="#0000ff" stroke-width="2"/>
<line x1="648" y1="335.5" x2="648" y2="543" stroke="#0000ff" stroke-width="2"/>
<line x1="648" y1="573.5" x2="648" y2="611" stroke="#0000ff" stroke-width="2"/>
<text x="642.0" y="318.3" font-size="13.1" textLength="13.0" lengthAdjust="spacingAndGlyphs">2,5</text>
<text x="644.7" y="332.3" font-size="13.1" textLength="10.6" lengthAdjust="spacingAndGlyphs">BU</text>
<text x="645.9" y="555.3" font-size="13.1" textLength="4.2" lengthAdjust="spacingAndGlyphs">1</text>
<text x="644.7" y="569.3" font-size="13.1" textLength="10.6" lengthAdjust="spacingAndGlyphs">BU</text>
<path d="M642.8,489.5 L648,484.3 L653.2,489.5 L648,494.7 Z" fill="#000" stroke="#fff" stroke-width="1.3" shape-rendering="auto"/>
<circle cx="648" cy="489.5" r="1.6" fill="#fff" shape-rendering="auto"/>
<text x="611.9" y="507.4" font-size="16.2" textLength="29.7" lengthAdjust="spacingAndGlyphs">Z51/5</text>
<text x="505.0" y="384.4" font-size="16.2" textLength="19.4" lengthAdjust="spacingAndGlyphs">W18</text>
<line x1="509.5" y1="391.5" x2="525" y2="391.5" stroke="#fff" stroke-width="1"/>
<line x1="517" y1="392" x2="517" y2="430" stroke="#d09a60" stroke-width="2"/>
<line x1="517" y1="456" x2="517" y2="543" stroke="#d09a60" stroke-width="2"/>
<line x1="517" y1="573.5" x2="517" y2="611" stroke="#d09a60" stroke-width="2"/>
<text x="514.4" y="441.3" font-size="13.1" textLength="5.3" lengthAdjust="spacingAndGlyphs">6</text>
<text x="513.7" y="455.3" font-size="13.1" textLength="10.6" lengthAdjust="spacingAndGlyphs">BN</text>
<text x="514.9" y="555.3" font-size="13.1" textLength="4.2" lengthAdjust="spacingAndGlyphs">1</text>
<text x="513.7" y="569.3" font-size="13.1" textLength="10.6" lengthAdjust="spacingAndGlyphs">BN</text>
<path d="M511.8,489.5 L517,484.3 L522.2,489.5 L517,494.7 Z" fill="#000" stroke="#fff" stroke-width="1.3" shape-rendering="auto"/>
<circle cx="517" cy="489.5" r="1.6" fill="#fff" shape-rendering="auto"/>
<text x="481.3" y="507.4" font-size="16.2" textLength="29.0" lengthAdjust="spacingAndGlyphs">Z51/9</text>
<polyline points="477.5,619 477.5,607 1300,607" fill="none" stroke="#fff" stroke-width="2" />
<rect x="477.5" y="623.5" width="900" height="45.5" fill="none" stroke="#fff" stroke-width="2"/>
<rect x="486" y="630" width="900" height="31" fill="none" stroke="#fff" stroke-width="2"/>
<rect x="514.5" y="610.5" width="5" height="4" fill="#000" stroke="#fff" stroke-width="1"/>
<line x1="517" y1="615" x2="517" y2="630" stroke="#fff" stroke-width="3"/>
<text x="503.3" y="620.8" font-size="10.5" textLength="8.4" lengthAdjust="spacingAndGlyphs">A4</text>
<text x="510.7" y="642.6" font-size="10.5" textLength="12.6" lengthAdjust="spacingAndGlyphs" transform="rotate(-90 517 638.8)">GND</text>
<rect x="537.5" y="610.5" width="5" height="4" fill="#000" stroke="#fff" stroke-width="1"/>
<line x1="540" y1="615" x2="540" y2="630" stroke="#fff" stroke-width="3"/>
<text x="524.6" y="620.8" font-size="10.5" textLength="8.4" lengthAdjust="spacingAndGlyphs">A6</text>
<text x="531.6" y="644.7" font-size="10.5" textLength="16.8" lengthAdjust="spacingAndGlyphs" transform="rotate(-90 540 640.9)">BATT</text>
<rect x="645.5" y="610.5" width="5" height="4" fill="#000" stroke="#fff" stroke-width="1"/>
<line x1="648" y1="615" x2="648" y2="630" stroke="#fff" stroke-width="3"/>
<text x="631.7" y="620.8" font-size="10.5" textLength="7.6" lengthAdjust="spacingAndGlyphs">B1</text>
<text x="641.7" y="642.6" font-size="10.5" textLength="12.6" lengthAdjust="spacingAndGlyphs" transform="rotate(-90 648 638.8)">IGN</text>
<rect x="878.5" y="610.5" width="5" height="4" fill="#000" stroke="#fff" stroke-width="1"/>
<line x1="881" y1="615" x2="881" y2="630" stroke="#fff" stroke-width="3"/>
<text x="864.5" y="620.8" font-size="10.5" textLength="8.4" lengthAdjust="spacingAndGlyphs">B3</text>
<text x="870.0" y="649.5" font-size="10.5" textLength="22.0" lengthAdjust="spacingAndGlyphs" transform="rotate(-90 881 645.7)">CAN-H</text>
<rect x="901.5" y="610.5" width="5" height="4" fill="#000" stroke="#fff" stroke-width="1"/>
<line x1="904" y1="615" x2="904" y2="630" stroke="#fff" stroke-width="3"/>
<text x="888.1" y="620.8" font-size="10.5" textLength="8.4" lengthAdjust="spacingAndGlyphs">B2</text>
<text x="893.0" y="649.5" font-size="10.5" textLength="22.0" lengthAdjust="spacingAndGlyphs" transform="rotate(-90 904 645.7)">CAN-L</text>
<text x="1259.8" y="620.3" font-size="10.5" textLength="8.4" lengthAdjust="spacingAndGlyphs">A3</text>
<line x1="1275" y1="609" x2="1275" y2="630" stroke="#fff" stroke-width="3"/>
<text x="1264.4" y="649.8" font-size="10.5" textLength="25.2" lengthAdjust="spacingAndGlyphs" transform="rotate(-90 1277 646)">K-LINE</text>
<g shape-rendering="auto"><circle cx="496" cy="645.5" r="4" fill="none" stroke="#fff" stroke-width="1.3"/><path d="M491,645.5 l3,-2 M491.5,648.5 l3.5,1.5 l-1,3" stroke="#fff" stroke-width="1.3" fill="none"/></g>
<g shape-rendering="auto"><circle cx="949.5" cy="645.5" r="4" fill="none" stroke="#fff" stroke-width="1.3"/><path d="M944.5,645.5 l3,-2 M945.0,648.5 l3.5,1.5 l-1,3" stroke="#fff" stroke-width="1.3" fill="none"/></g>
<text x="486.2" y="688.9" font-size="16.2" textLength="20.3" lengthAdjust="spacingAndGlyphs">N78</text>
<text x="940.2" y="688.9" font-size="16.2" textLength="19.5" lengthAdjust="spacingAndGlyphs">N78</text>
<text x="884.5" y="142.4" font-size="16.2" textLength="11.0" lengthAdjust="spacingAndGlyphs">A1</text>
<polyline points="924.5,149 861.5,149 861.5,202.5 923,202.5" fill="none" stroke="#fff" stroke-width="2" />
<path d="M924.5,148.5 C926,154 929,160 929,166 C928,172 921,176 918,182 C917,188 920,195 923,203" fill="none" stroke="#fff" stroke-width="1.8" shape-rendering="auto"/>
<text x="882.1" y="163.9" font-size="16.2" textLength="19.7" lengthAdjust="spacingAndGlyphs">e53</text>
<rect x="886.5" y="168.8" width="19" height="14.6" rx="3" fill="none" stroke="#fff" stroke-width="1.2" shape-rendering="auto"/>
<text x="889.5" y="175.3" font-size="7.5" textLength="13.5" lengthAdjust="spacingAndGlyphs">LOW</text><text x="888" y="182.2" font-size="7.5" textLength="16.5" lengthAdjust="spacingAndGlyphs">RANGE</text>
<text x="866.8" y="199.3" font-size="13.1" textLength="23.4" lengthAdjust="spacingAndGlyphs">CAN-H</text>
<text x="893.0" y="199.3" font-size="13.1" textLength="23.0" lengthAdjust="spacingAndGlyphs">CAN-L</text>
<text x="854.6" y="218.1" font-size="13.1" textLength="5.3" lengthAdjust="spacingAndGlyphs">B</text>
<polyline points="861.5,209.5 861.5,217.5 921,217.5 923.5,215 921,212.5 923.5,210" fill="none" stroke="#fff" stroke-width="1.5" />
<text x="870.6" y="214.4" font-size="13.1" textLength="5.3" lengthAdjust="spacingAndGlyphs">9</text>
<text x="889.1" y="214.4" font-size="13.1" textLength="9.5" lengthAdjust="spacingAndGlyphs">10</text>
<line x1="881" y1="202.5" x2="881" y2="212" stroke="#fff" stroke-width="3"/>
<line x1="904" y1="202.5" x2="904" y2="212" stroke="#fff" stroke-width="3"/>
<rect x="878.5" y="211.5" width="5" height="4" fill="#000" stroke="#fff" stroke-width="1"/>
<rect x="901.5" y="211.5" width="5" height="4" fill="#000" stroke="#fff" stroke-width="1"/>
<line x1="881" y1="216" x2="881" y2="269.5" stroke="#fff" stroke-width="2"/>
<line x1="881" y1="299" x2="881" y2="345.5" stroke="#fff" stroke-width="2"/>
<line x1="881" y1="374" x2="881" y2="464" stroke="#fff" stroke-width="2"/>
<line x1="881" y1="494" x2="881" y2="531" stroke="#fff" stroke-width="2"/>
<line x1="881" y1="563" x2="881" y2="610" stroke="#fff" stroke-width="2"/>
<line x1="904" y1="216" x2="904" y2="269.5" stroke="#00d800" stroke-width="2"/>
<line x1="904" y1="297" x2="904" y2="345.5" stroke="#00d800" stroke-width="2"/>
<line x1="904" y1="377.5" x2="904" y2="464" stroke="#00d800" stroke-width="2"/>
<line x1="904" y1="494" x2="904" y2="531" stroke="#00d800" stroke-width="2"/>
<line x1="904" y1="563" x2="904" y2="610" stroke="#00d800" stroke-width="2"/>
<text x="870.9" y="281.8" font-size="13.1" textLength="18.3" lengthAdjust="spacingAndGlyphs">0,35</text>
<text x="897.9" y="281.8" font-size="13.1" textLength="18.3" lengthAdjust="spacingAndGlyphs">0,35</text>
<text x="876.3" y="295.8" font-size="13.1" textLength="11.4" lengthAdjust="spacingAndGlyphs">WH</text>
<text x="899.2" y="295.8" font-size="13.1" textLength="10.6" lengthAdjust="spacingAndGlyphs">GN</text>
<text x="870.9" y="358.3" font-size="13.1" textLength="18.3" lengthAdjust="spacingAndGlyphs">0,35</text>
<text x="897.9" y="358.3" font-size="13.1" textLength="18.3" lengthAdjust="spacingAndGlyphs">0,35</text>
<text x="876.3" y="372.3" font-size="13.1" textLength="11.4" lengthAdjust="spacingAndGlyphs">WH</text>
<text x="899.2" y="372.3" font-size="13.1" textLength="10.6" lengthAdjust="spacingAndGlyphs">GN</text>
<text x="870.9" y="477.8" font-size="13.1" textLength="18.3" lengthAdjust="spacingAndGlyphs">0,35</text>
<text x="897.9" y="477.8" font-size="13.1" textLength="18.3" lengthAdjust="spacingAndGlyphs">0,35</text>
<text x="876.3" y="491.8" font-size="13.1" textLength="11.4" lengthAdjust="spacingAndGlyphs">WH</text>
<text x="899.2" y="491.8" font-size="13.1" textLength="10.6" lengthAdjust="spacingAndGlyphs">GN</text>
<text x="870.9" y="545.3" font-size="13.1" textLength="18.3" lengthAdjust="spacingAndGlyphs">0,35</text>
<text x="897.9" y="545.3" font-size="13.1" textLength="18.3" lengthAdjust="spacingAndGlyphs">0,35</text>
<text x="876.3" y="559.3" font-size="13.1" textLength="11.4" lengthAdjust="spacingAndGlyphs">WH</text>
<text x="899.2" y="559.3" font-size="13.1" textLength="10.6" lengthAdjust="spacingAndGlyphs">GN</text>
<polyline points="877,264.5 877,257.5 908.5,254.0 908.5,246.0" fill="none" stroke="#fff" stroke-width="2" />
<polyline points="877,398 877,391 908.5,387.5 908.5,379.5" fill="none" stroke="#fff" stroke-width="2" />
<polyline points="877,449.5 877,442.5 908.5,439.0 908.5,431.0" fill="none" stroke="#fff" stroke-width="2" />
<polyline points="877,582.5 877,575.5 908.5,572.0 908.5,564.0" fill="none" stroke="#fff" stroke-width="2" />
<path d="M875.8,317.5 L881,312.3 L886.2,317.5 L881,322.7 Z" fill="#000" stroke="#fff" stroke-width="1.3" shape-rendering="auto"/>
<circle cx="881" cy="317.5" r="1.6" fill="#fff" shape-rendering="auto"/>
<path d="M898.8,317.5 L904,312.3 L909.2,317.5 L904,322.7 Z" fill="#000" stroke="#fff" stroke-width="1.3" shape-rendering="auto"/>
<circle cx="904" cy="317.5" r="1.6" fill="#fff" shape-rendering="auto"/>
<text x="838.2" y="332.9" font-size="16.2" textLength="33.5" lengthAdjust="spacingAndGlyphs">Z50/12</text>
<text x="913.0" y="332.9" font-size="16.2" textLength="32.0" lengthAdjust="spacingAndGlyphs">Z50/11</text>
<path d="M875.8,510.5 L881,505.3 L886.2,510.5 L881,515.7 Z" fill="#000" stroke="#fff" stroke-width="1.3" shape-rendering="auto"/>
<circle cx="881" cy="510.5" r="1.6" fill="#fff" shape-rendering="auto"/>
<path d="M898.8,510.5 L904,505.3 L909.2,510.5 L904,515.7 Z" fill="#000" stroke="#fff" stroke-width="1.3" shape-rendering="auto"/>
<circle cx="904" cy="510.5" r="1.6" fill="#fff" shape-rendering="auto"/>
<text x="847.1" y="528.9" font-size="16.2" textLength="27.7" lengthAdjust="spacingAndGlyphs">Z51/1</text>
<text x="910.9" y="528.9" font-size="16.2" textLength="29.7" lengthAdjust="spacingAndGlyphs">Z51/2</text>
<polyline points="919,416 919,403 866,403 864,405 867,409 866,413 861,417 862,421.5 923.5,421.5 923.5,410.5" fill="none" stroke="#fff" stroke-width="2" />
<text x="853.3" y="410.8" font-size="10.5" textLength="3.4" lengthAdjust="spacingAndGlyphs">1</text>
<text x="845.5" y="435.4" font-size="16.2" textLength="15.8" lengthAdjust="spacingAndGlyphs">X18</text>
<text x="871.9" y="416.8" font-size="10.5" textLength="4.2" lengthAdjust="spacingAndGlyphs">2</text>
<text x="894.8" y="416.8" font-size="10.5" textLength="3.4" lengthAdjust="spacingAndGlyphs">1</text>
<rect x="878.5" y="415" width="5" height="4" fill="#000" stroke="#fff" stroke-width="1"/>
<rect x="901.5" y="415" width="5" height="4" fill="#000" stroke="#fff" stroke-width="1"/>
<text x="1056.9" y="141.4" font-size="16.2" textLength="33.6" lengthAdjust="spacingAndGlyphs">W29/2</text>
<line x1="1067" y1="148" x2="1083" y2="148" stroke="#fff" stroke-width="2"/>
<line x1="1075" y1="149" x2="1075" y2="186" stroke="#d09a60" stroke-width="2"/>
<line x1="1075" y1="214" x2="1075" y2="295" stroke="#d09a60" stroke-width="2"/>
<line x1="1075" y1="322.5" x2="1075" y2="366" stroke="#d09a60" stroke-width="2"/>
<text x="1072.3" y="199.3" font-size="13.1" textLength="5.3" lengthAdjust="spacingAndGlyphs">6</text>
<text x="1071.7" y="213.3" font-size="13.1" textLength="10.6" lengthAdjust="spacingAndGlyphs">BN</text>
<text x="1069.0" y="308.8" font-size="13.1" textLength="13.0" lengthAdjust="spacingAndGlyphs">0,5</text>
<text x="1071.7" y="322.8" font-size="13.1" textLength="10.6" lengthAdjust="spacingAndGlyphs">BN</text>
<path d="M1069.8,253.5 L1075,248.3 L1080.2,253.5 L1075,258.7 Z" fill="#000" stroke="#fff" stroke-width="1.3" shape-rendering="auto"/>
<circle cx="1075" cy="253.5" r="1.6" fill="#fff" shape-rendering="auto"/>
<text x="1037.0" y="268.9" font-size="16.2" textLength="30.9" lengthAdjust="spacingAndGlyphs">Z50/4</text>
<polyline points="1037,372.5 1037,360.5 1122,360.5 1126,364 1121,368 1125,373" fill="none" stroke="#fff" stroke-width="1.5" />
<polyline points="1125,377 1037,377 1037,462 1127,462" fill="none" stroke="#fff" stroke-width="2" />
<path d="M1125,376.5 C1120,385 1118,392 1121,402 C1126,418 1132,432 1130,442 C1128,450 1126,456 1127,462.5" fill="none" stroke="#fff" stroke-width="1.4" shape-rendering="auto"/>
<text x="1042.9" y="373.3" font-size="10.5" textLength="4.2" lengthAdjust="spacingAndGlyphs">A</text>
<rect x="1050.0" y="365" width="5" height="4" fill="#000" stroke="#fff" stroke-width="1"/>
<line x1="1052.5" y1="369" x2="1052.5" y2="377" stroke="#fff" stroke-width="3"/>
<text x="1065.4" y="373.3" font-size="10.5" textLength="4.2" lengthAdjust="spacingAndGlyphs">B</text>
<rect x="1072.5" y="365" width="5" height="4" fill="#000" stroke="#fff" stroke-width="1"/>
<line x1="1075" y1="369" x2="1075" y2="377" stroke="#fff" stroke-width="3"/>
<text x="1087.9" y="373.3" font-size="10.5" textLength="4.2" lengthAdjust="spacingAndGlyphs">H</text>
<rect x="1095.0" y="365" width="5" height="4" fill="#000" stroke="#fff" stroke-width="1"/>
<line x1="1097.5" y1="369" x2="1097.5" y2="377" stroke="#fff" stroke-width="3"/>
<line x1="1052.5" y1="377" x2="1052.5" y2="435" stroke="#fff" stroke-width="1"/>
<g shape-rendering="auto"><path d="M1049.0,380.5 h7 l-3.5,6 Z" fill="#fff"/><path d="M1048.5,387.0 h8" stroke="#fff" stroke-width="1"/><path d="M1047.5,382.5 l-4,2 M1047.5,385.5 l-4,2" stroke="#fff" stroke-width="1"/></g>
<rect x="1049.5" y="388" width="5" height="14.5" fill="#000" stroke="#fff" stroke-width="1"/>
<g shape-rendering="auto"><path d="M1049.0,410 h7 l-3.5,6 Z" fill="#fff"/><path d="M1048.5,416.5 h8" stroke="#fff" stroke-width="1"/><path d="M1047.5,412 l-4,2 M1047.5,415 l-4,2" stroke="#fff" stroke-width="1"/></g>
<g shape-rendering="auto"><path d="M1049.0,425.5 h7 l-3.5,6 Z" fill="#fff"/><path d="M1048.5,432.0 h8" stroke="#fff" stroke-width="1"/><path d="M1047.5,427.5 l-4,2 M1047.5,430.5 l-4,2" stroke="#fff" stroke-width="1"/></g>
<polyline points="1052.5,435 1097.5,435" fill="none" stroke="#fff" stroke-width="1.5" />
<line x1="1075" y1="377" x2="1075" y2="435" stroke="#fff" stroke-width="2"/>
<circle cx="1075" cy="435" r="2" fill="#fff" shape-rendering="auto"/>
<line x1="1097.5" y1="377" x2="1097.5" y2="402" stroke="#fff" stroke-width="1.5"/>
<circle cx="1097.5" cy="402.5" r="2" fill="#fff" shape-rendering="auto"/>
<circle cx="1097.5" cy="415.5" r="2" fill="#fff" shape-rendering="auto"/>
<line x1="1097.5" y1="415.5" x2="1097.5" y2="435" stroke="#fff" stroke-width="1.5"/>
<circle cx="1097.5" cy="435" r="2" fill="#fff" shape-rendering="auto"/>
<path d="M1097.5,415.5 L1105,404" stroke="#fff" stroke-width="1.5" shape-rendering="auto"/>
<path d="M1102,409 l5,-3 v6 Z M1107,407.5 h9 M1107,410.5 h9 M1117,405 v8" stroke="#fff" stroke-width="1.2" fill="#fff" shape-rendering="auto"/>
<text x="1045.5" y="451.4" font-size="16.2" textLength="11.5" lengthAdjust="spacingAndGlyphs">e2</text>
<text x="1104.8" y="451.4" font-size="16.2" textLength="10.5" lengthAdjust="spacingAndGlyphs">s1</text>
<text x="1063.8" y="481.4" font-size="16.2" textLength="32.5" lengthAdjust="spacingAndGlyphs">S97/6</text>
<polyline points="1052.5,365 1052.5,346 1017,346 1017,396.5" fill="none" stroke="#fff" stroke-width="2" />
<line x1="1017" y1="427.5" x2="1017" y2="449" stroke="#fff" stroke-width="2"/>
<text x="1008.4" y="411.3" font-size="13.1" textLength="18.3" lengthAdjust="spacingAndGlyphs">0,35</text>
<text x="1013.3" y="425.3" font-size="13.1" textLength="11.4" lengthAdjust="spacingAndGlyphs">WH</text>
<line x1="1017" y1="449" x2="1017" y2="473.5" stroke="#0000ff" stroke-width="2"/>
<line x1="1017" y1="500.5" x2="1017" y2="522" stroke="#0000ff" stroke-width="2"/>
<text x="1011.0" y="485.8" font-size="13.1" textLength="13.0" lengthAdjust="spacingAndGlyphs">0,5</text>
<text x="1013.7" y="499.8" font-size="13.1" textLength="10.6" lengthAdjust="spacingAndGlyphs">BU</text>
<path d="M1011.8,449.5 L1017,444.3 L1022.2,449.5 L1017,454.7 Z" fill="#000" stroke="#fff" stroke-width="1.3" shape-rendering="auto"/>
<circle cx="1017" cy="449.5" r="1.6" fill="#fff" shape-rendering="auto"/>
<text x="982.9" y="467.4" font-size="16.2" textLength="28.3" lengthAdjust="spacingAndGlyphs">Z50/1</text>
<polyline points="1097.5,365 1097.5,346 1275.5,346 1275.5,396" fill="none" stroke="#0000ff" stroke-width="2" />
<line x1="1275.5" y1="425" x2="1275.5" y2="458" stroke="#0000ff" stroke-width="2"/>
<text x="1268.9" y="409.8" font-size="13.1" textLength="13.0" lengthAdjust="spacingAndGlyphs">0,5</text>
<text x="1270.7" y="423.8" font-size="13.1" textLength="10.6" lengthAdjust="spacingAndGlyphs">BU</text>
<text x="1246.3" y="459.8" font-size="10.5" textLength="3.4" lengthAdjust="spacingAndGlyphs">1</text>
<polyline points="1290,452.5 1261,452.5 1258,456 1262,459 1256.5,463 1261,467 1257,471.5 1290,471.5" fill="none" stroke="#fff" stroke-width="1.5" />
<text x="1261.3" y="464.8" font-size="10.5" textLength="8.4" lengthAdjust="spacingAndGlyphs">30</text>
<text x="1244.1" y="488.4" font-size="16.2" textLength="15.8" lengthAdjust="spacingAndGlyphs">X18</text>
<rect x="1273.0" y="459" width="5" height="4" fill="#000" stroke="#fff" stroke-width="1"/>
<line x1="1275.5" y1="472" x2="1275.5" y2="546" stroke="#505050" stroke-width="2"/>
<line x1="1275.5" y1="577" x2="1275.5" y2="610" stroke="#505050" stroke-width="2"/>
<text x="1268.9" y="560.8" font-size="13.1" textLength="13.0" lengthAdjust="spacingAndGlyphs">0,5</text>
<text x="1270.7" y="574.8" font-size="13.1" textLength="10.6" lengthAdjust="spacingAndGlyphs">GY</text>
<text x="981.7" y="519.4" font-size="16.2" textLength="16.2" lengthAdjust="spacingAndGlyphs">C/E</text>
<polyline points="1001,529 1001,518 1039,518 1043,521 1038,525 1042,529" fill="none" stroke="#fff" stroke-width="1.5" />
<polyline points="1040,533 1001,533 1001,586 1039,586" fill="none" stroke="#fff" stroke-width="2" />
<path d="M1040,532.5 C1043,540 1046,546 1045,552 C1043,558 1036,562 1035,568 C1035,575 1038,580 1039,586.5" fill="none" stroke="#fff" stroke-width="1.4" shape-rendering="auto"/>
<text x="1008.9" y="529.3" font-size="10.5" textLength="4.2" lengthAdjust="spacingAndGlyphs">4</text>
<rect x="1014.5" y="521.5" width="5" height="4" fill="#000" stroke="#fff" stroke-width="1"/>
<line x1="1017" y1="525.5" x2="1017" y2="533" stroke="#fff" stroke-width="3"/>
<polyline points="1017,533 1017,551 1031,551" fill="none" stroke="#fff" stroke-width="1.5" />
<path d="M1030,548.5 L1035,551 L1030,553.5 Z" fill="#fff" shape-rendering="auto"/>
<text x="1023.2" y="547.3" font-size="10.5" textLength="12.6" lengthAdjust="spacingAndGlyphs">58d</text>
<text x="1014.0" y="603.9" font-size="16.2" textLength="10.5" lengthAdjust="spacingAndGlyphs">F1</text>
<rect x="1052" y="565" width="115" height="19" fill="none" stroke="#fff" stroke-width="2"/>
<g transform="translate(1053 565.5)" shape-rendering="crispEdges"><path d="M0,6 H7 L8.5,4 H16 L17,5 H22 V8 L21,9 H15 V13 L14,14 H11 L10.5,15 H5 L4.5,14 H0 Z" fill="#fff"/><path d="M9.5,6.5 C7.5,7 6.5,9 7,12.5 M10,6.5 L12.5,7.5 M14,6.5 H18" fill="none" stroke="#000" stroke-width="1" shape-rendering="auto"/></g>
<text x="1076.3" y="580.7" font-size="16.2" textLength="74.5" lengthAdjust="spacingAndGlyphs">PE 54.15-2000</text>
</g></svg>
<!-- toolbar -->
<div class="abs" id="tool"></div>
<div class="abs sep" style="left:56px"></div><div class="abs sep" style="left:166px"></div><div class="abs sep" style="left:212px"></div><div class="abs sep" style="left:257px"></div><div class="abs sep" style="left:332px"></div>
<svg class="abs" style="left:10px;top:729px" width="330" height="31" viewBox="10 729 330 31">
<path d="M33,737 l-5,3.5 l5,3.5 v-2.5 h7 v6 h-10 v-3 h-2.5 v5.5 h15 v-11 h-9.5 Z" fill="#000"/>
<rect x="71.5" y="733.5" width="23" height="23" fill="#fff" stroke="#777"/>
<path d="M78,748 c-2,-3 -3,-5 -2,-5.5 c1,-.5 2,1 3,2.5 v-6.5 c0,-1.5 1.800,-1.5 1.800,0 v4 v-5.5 c0,-1.5 1.800,-1.5 1.800,0 v5.5 v-4.800 c0,-1.5 1.800,-1.5 1.800,0 v5 v-3.5 c0,-1.300 1.700,-1.300 1.700,0 v6 c0,3 -1,4 -1.5,5.5 h-6 c-.5,-1.5 -1.5,-2 -2.400,-3.200 Z" fill="#fff" stroke="#000" stroke-width="1"/>
<circle cx="110.5" cy="741.5" r="4.5" fill="#fff" stroke="#000" stroke-width="1.300"/><path d="M113.5,745 l5.5,6" stroke="#000" stroke-width="2.200"/>
<path d="M133,744.5 h17 M141.5,736 v17" stroke="#000" stroke-width="1.300"/>
<circle cx="189.5" cy="742.5" r="5" fill="#fff" stroke="#000" stroke-width="1.3"/><rect x="187.5" y="748.5" width="4" height="4.5" fill="#fff" stroke="#000" stroke-width="1.2"/><path d="M188,752.5 l3,-3 M188,749.5 l3,3" stroke="#000" stroke-width=".7"/><path d="M190,740 c2,1 2,4 .5,5.5" fill="none" stroke="#000" stroke-width=".8"/>
<path d="M231.5,745 l4,-8.5 h8 l-3,8.5 Z" fill="#e6e6e6" stroke="#666" stroke-width=".7"/><path d="M235,739 h6.5 M234,741 h6.5 M233.2,743 h6.5" stroke="#888" stroke-width=".8"/><path d="M227.5,748 l3.5,-3.5 h11 l2.5,3.5 v2.5 l-3,2.5 h-12 l-2,-2.5 Z" fill="#8a8a8a" stroke="#5a5a5a" stroke-width=".7"/><path d="M228,749 h13 M229.5,751.5 h11.5" stroke="#d0d0d0" stroke-width=".9"/><path d="M241.5,744 c3,0 3.5,5 1.5,7.5" fill="none" stroke="#555" stroke-width="1.5"/>
<path d="M273.5,744.5 l7,-5 v3 h9 v4 h-9 v3 Z M319.5,744.5 l-7,-5 v3 h-9 v4 h9 v3 Z" fill="#000"/>
</svg>
<svg class="abs" style="left:1140px;top:729px" width="140" height="31" viewBox="1140 729 140 31">
<text x="1219" y="742.5" font-size="10.5" font-weight="bold" textLength="53.5" lengthAdjust="spacing" style="fill:#222;font-family:'Liberation Serif',serif">Model 163</text>
<path d="M1216,755.5 C1230,752 1252,749.5 1268,751 C1256,752.5 1238,755 1222,756.5 Z" fill="#9a9a9a" opacity=".7"/><path d="M1212,753.5 C1225,748.5 1250,746.5 1270,748.5 C1256,750.5 1236,753.5 1218,754.5 Z" fill="#f0a428"/>
</svg>
<!-- taskbar -->
<div class="abs" id="task"></div>
<div class="abs tb" style="left:60px;width:54px;background:linear-gradient(#e3ebf6,#c6d6ea 50%,#b9cde6)"></div>
<div class="abs tb" style="left:115px;width:4px;opacity:.6"></div>
<div class="abs tb" style="left:121px;width:60px"></div>
<div class="abs tb" style="left:183.5px;width:54px"></div>
<div class="abs tb" style="left:238px;width:4px;opacity:.6"></div>
<div class="abs tb" style="left:245.5px;width:59px"></div>
<svg class="abs" style="left:0;top:761px" width="320" height="39" viewBox="0 761 320 39">
<defs><radialGradient id="orb" cx=".5" cy=".35" r=".7"><stop offset="0" stop-color="#6fb3e8"/><stop offset=".6" stop-color="#2466a8"/><stop offset="1" stop-color="#123a6a"/></radialGradient></defs>
<circle cx="26.5" cy="780" r="18" fill="url(#orb)" stroke="#25466c" stroke-width="1"/>
<path d="M17,773 q4,-2.5 8,-.5 l-1.5,6.5 q-4,-2 -8,.5 Z" fill="#e8542a"/><path d="M26.5,772.5 q4,2 8,-.5 l-1.5,6.5 q-4,2.5 -8,.5 Z" fill="#7cc043"/>
<path d="M15,781 q4,-2.5 8,-.5 l-1.5,6.5 q-4,-2 -8,.5 Z" fill="#3d9be0"/><path d="M24.5,780.5 q4,2 8,-.5 l-1.5,6.5 q-4,2.5 -8,.5 Z" fill="#f9c32b"/>
<text x="74.5" y="791" font-size="42" font-weight="bold" style="fill:#1f7fd6;font-family:'Liberation Sans',sans-serif">e</text><path d="M74,793.5 C67,786 80,768 101,765 C90,770.5 78,782 77,792.5 Z" fill="#f2b52a"/><path d="M100,765 C103.5,765.5 103,770 100.5,773 C101,770 100.5,767.5 98.5,766.5 Z" fill="#f2b52a"/>
<path d="M136,772 h10 l2,2 h18 v22 h-30 Z" fill="#f5d67a" stroke="#c8a040" stroke-width="1"/><path d="M138,779 h28 v17 h-28 Z" fill="#fbe9a4" stroke="#d2aa48" stroke-width=".8"/><path d="M141,786 h23 v10 h-5 v-5 h-13 v5 h-5 Z" fill="#7db8e6" stroke="#3f7fb8" stroke-width=".8"/>
<rect x="194" y="765" width="32" height="32" fill="#c2dede"/><path d="M218,768 l2,2 l-14,16 l-2,-1 l-5,8 l-1,-1 l4,-8.5 l-1.5,-1.5 Z" fill="#1760d8"/><path d="M203,781 l6,5 M205,779 l6,5" stroke="#1760d8" stroke-width="1.5"/>
<rect x="265" y="768" width="24" height="18" rx="1" fill="#222" stroke="#999" stroke-width="1.5"/><path d="M267,780 l3,-6 l2,8 l3,-10 l3,9 l2,-5 l3,6 l3,-4" stroke="#2fe070" stroke-width="1.200" fill="none"/><rect x="259" y="774" width="7" height="17" fill="#bbb" stroke="#777" stroke-width=".6"/><ellipse cx="279" cy="792.5" rx="9" ry="2.5" fill="#ddd" stroke="#888" stroke-width=".6"/><rect x="276" y="786" width="6" height="5" fill="#aaa"/>
</svg>
<svg class="abs" style="left:960px;top:761px" width="320" height="39" viewBox="960 761 320 39">
<path d="M973,783.5 l4.5,-5 l4.5,5 Z" fill="#fff"/>
<path d="M995,773 v15 M995.5,773.5 h9 l-1.5,3.5 l1.5,3.5 h-9" fill="#fff" stroke="#444" stroke-width="1.200"/><circle cx="1004.5" cy="785" r="4.5" fill="#e03020"/><path d="M1002.5,783 l4,4 m0,-4 l-4,4" stroke="#fff" stroke-width="1.300"/>
<rect x="1018" y="773" width="16" height="15" fill="#0a2ed0"/><text x="1019" y="786" font-size="14" font-weight="bold" textLength="14" lengthAdjust="spacingAndGlyphs" style="fill:#fff;font-family:'Liberation Sans',sans-serif">01</text>
<rect x="1042" y="773" width="16" height="15" fill="#1030c8"/><path d="M1044,788 v-7 l6,-5 l6,5 v7 Z" fill="#bdbdbd" stroke="#222" stroke-width=".8"/><path d="M1042.5,773.5 l15,14 m0,-14 l-15,14" stroke="#b01010" stroke-width="1.600"/>
<rect x="1066" y="773" width="16" height="15" fill="#0a2ed0"/><path d="M1068,776 h5 a2,2 0 0 1 0,4 h-3 a2.5,2.5 0 0 0 0,5 h8 M1068,778 h3 M1076,783.5 h4 v3 h-4 Z" fill="none" stroke="#fff" stroke-width="1.300"/>
<circle cx="1097.5" cy="780.5" r="5.5" fill="#d8dde6" stroke="#444" stroke-width="1"/><path d="M1097.5,775.5 l1,4.5 l3.5,3 l-4.5,-1.5 l-4.5,1.5 l3.5,-3 Z" fill="#333"/><path d="M1090,776 a9,9 0 0 0 0,9 M1105,776 a9,9 0 0 1 0,9" stroke="#2a50c0" stroke-width="1.200" fill="none"/>
<path d="M1115,787 h2 v-2.5 h-2 Z M1118.5,787 h2 v-5 h-2 Z M1122,787 h2 v-7.5 h-2 Z M1125.5,787 h2 v-10 h-2 Z" fill="#e8e8e8" stroke="#666" stroke-width=".4"/><circle cx="1126" cy="783.5" r="3.300" fill="#f6b320"/>
<path d="M1138,778 h3 l4,-4 v14 l-4,-4 h-3 Z" fill="#f4f4f4" stroke="#555" stroke-width=".6"/><path d="M1147,777 q2.5,4 0,8 M1149.5,775 q3.5,6 0,12" fill="none" stroke="#f4f4f4" stroke-width="1.200"/>
<rect x="1163" y="774" width="9" height="13" rx="1.5" fill="#fff" stroke="#333" stroke-width="1.300"/><path d="M1165,777 h5 M1165,780 h5 M1165,783 h5" stroke="#333" stroke-width="1"/><path d="M1172,779 h4 v5 h-4" fill="#fff" stroke="#333" stroke-width="1"/>
<text x="1219.5" y="777.5" font-size="12" text-anchor="middle" style="fill:#fff;font-family:'Liberation Sans',sans-serif">10:13 AM</text>
<text x="1220.5" y="794.5" font-size="12" text-anchor="middle" style="fill:#fff;font-family:'Liberation Sans',sans-serif">7/26/2017</text>
<defs><linearGradient id="sd" x1="0" y1="0" x2="0" y2="1"><stop offset="0" stop-color="#566a86"/><stop offset=".5" stop-color="#64799a"/><stop offset="1" stop-color="#8397b5"/></linearGradient></defs><rect x="1258.5" y="762.5" width="23" height="38" fill="url(#sd)" stroke="#4b5c75" stroke-width="1"/><path d="M1257.5,762 v38" stroke="#a9bbd3" stroke-width="1"/>
</svg>
</body></html>
